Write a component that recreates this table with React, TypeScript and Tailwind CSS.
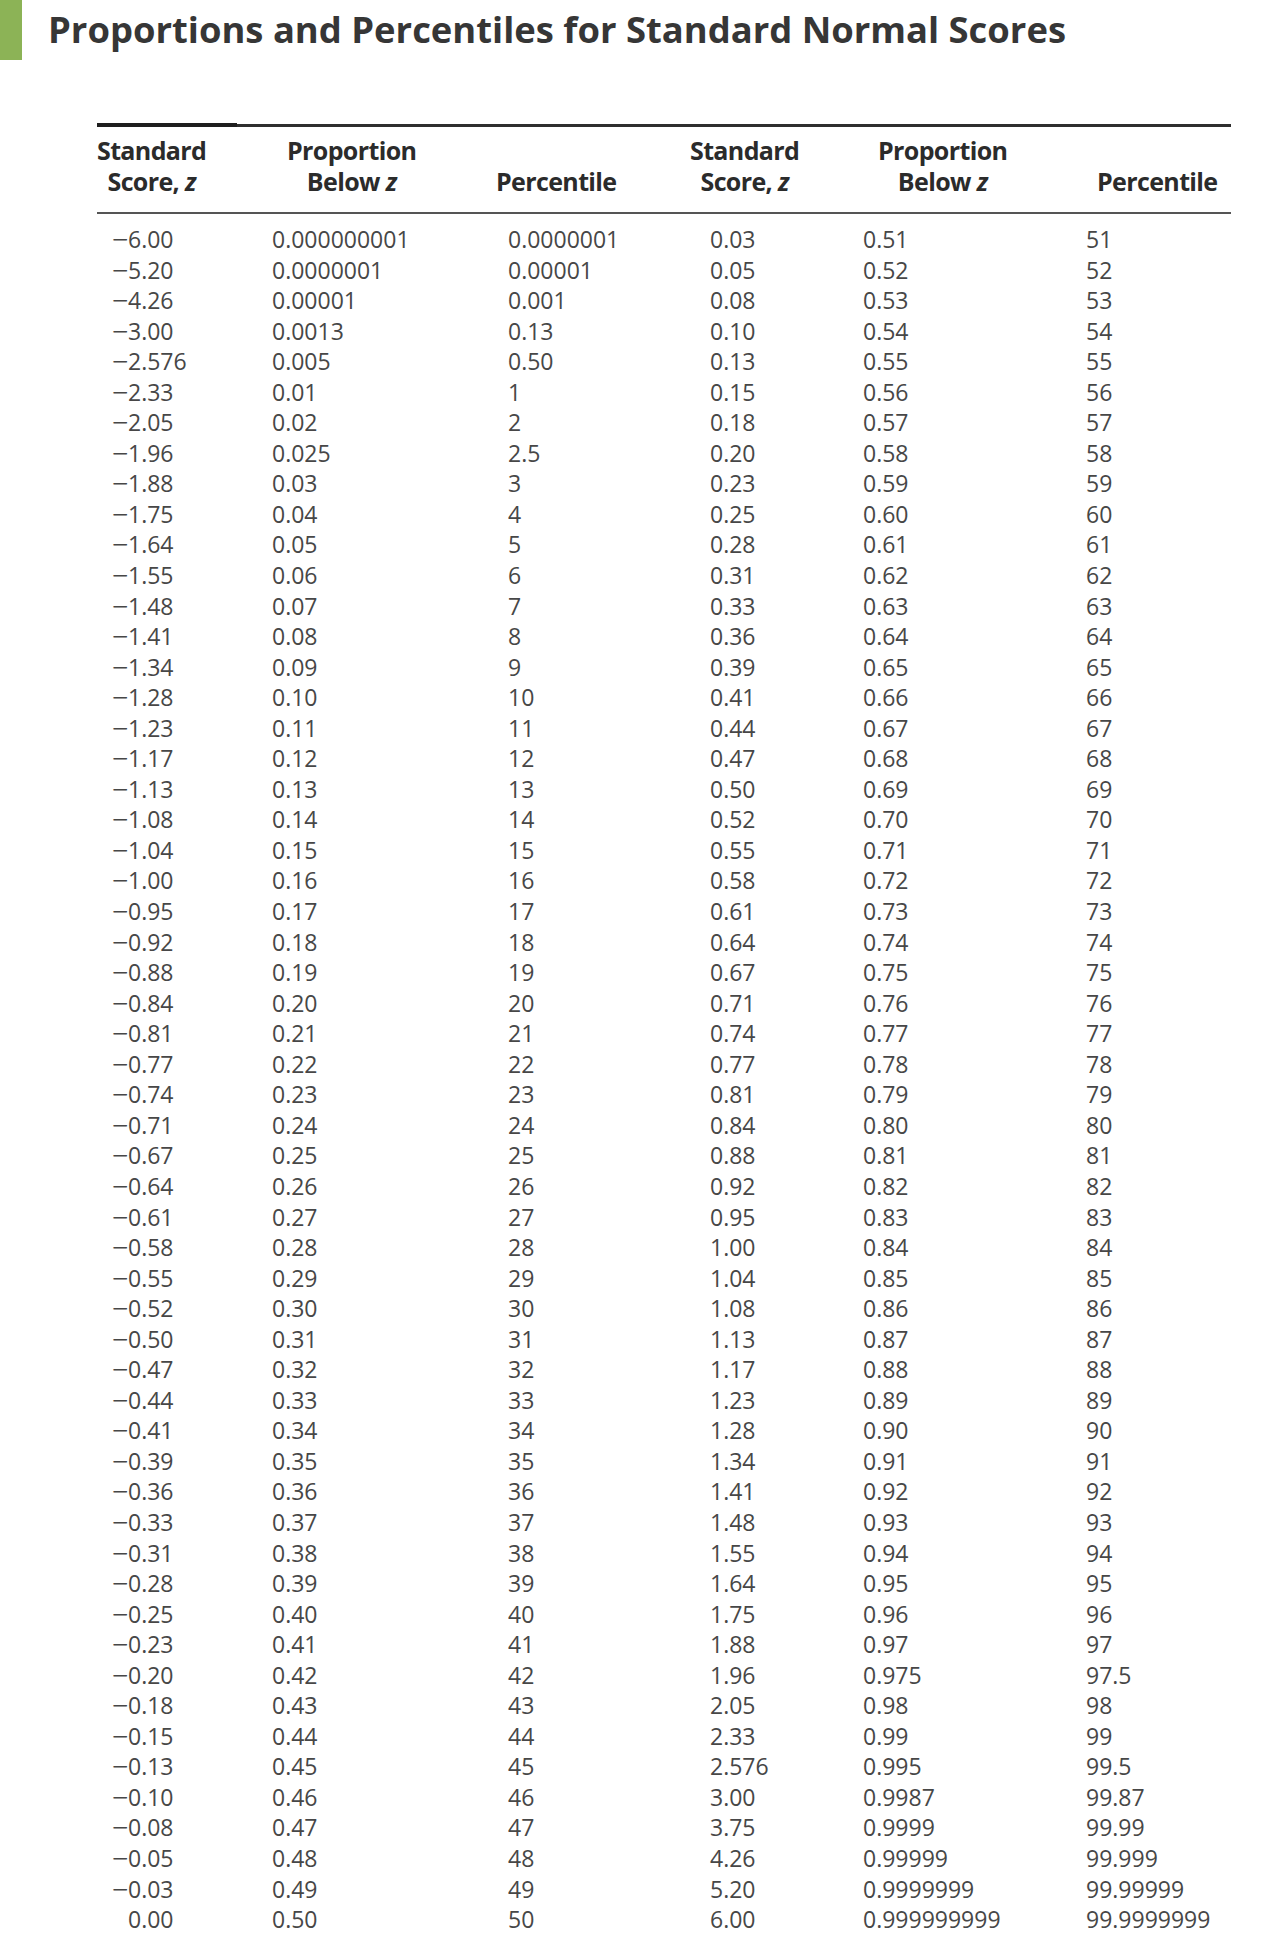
const leftZ = [
  "-6.00", "-5.20", "-4.26", "-3.00", "-2.576", "-2.33", "-2.05", "-1.96", "-1.88", "-1.75",
  "-1.64", "-1.55", "-1.48", "-1.41", "-1.34", "-1.28", "-1.23", "-1.17", "-1.13", "-1.08",
  "-1.04", "-1.00", "-0.95", "-0.92", "-0.88", "-0.84", "-0.81", "-0.77", "-0.74", "-0.71",
  "-0.67", "-0.64", "-0.61", "-0.58", "-0.55", "-0.52", "-0.50", "-0.47", "-0.44", "-0.41",
  "-0.39", "-0.36", "-0.33", "-0.31", "-0.28", "-0.25", "-0.23", "-0.20", "-0.18", "-0.15",
  "-0.13", "-0.10", "-0.08", "-0.05", "-0.03", "0.00",
];

const rightZ = [
  "0.03", "0.05", "0.08", "0.10", "0.13", "0.15", "0.18", "0.20", "0.23", "0.25",
  "0.28", "0.31", "0.33", "0.36", "0.39", "0.41", "0.44", "0.47", "0.50", "0.52",
  "0.55", "0.58", "0.61", "0.64", "0.67", "0.71", "0.74", "0.77", "0.81", "0.84",
  "0.88", "0.92", "0.95", "1.00", "1.04", "1.08", "1.13", "1.17", "1.23", "1.28",
  "1.34", "1.41", "1.48", "1.55", "1.64", "1.75", "1.88", "1.96", "2.05", "2.33",
  "2.576", "3.00", "3.75", "4.26", "5.20", "6.00",
];

// 0.03 .. 0.50 and 3 .. 50
const mid = Array.from({ length: 48 }, (_, i) => i + 3);
const leftProp = [
  "0.000000001", "0.0000001", "0.00001", "0.0013", "0.005", "0.01", "0.02", "0.025",
  ...mid.map((n) => (n / 100).toFixed(2)),
];
const leftPct = [
  "0.0000001", "0.00001", "0.001", "0.13", "0.50", "1", "2", "2.5",
  ...mid.map((n) => String(n)),
];

const upper = Array.from({ length: 47 }, (_, i) => i + 51);
const rightProp = [
  ...upper.map((n) => (n / 100).toFixed(2)),
  "0.975", "0.98", "0.99", "0.995", "0.9987", "0.9999", "0.99999", "0.9999999", "0.999999999",
];
const rightPct = [
  ...upper.map((n) => String(n)),
  "97.5", "98", "99", "99.5", "99.87", "99.99", "99.999", "99.99999", "99.9999999",
];

function ZScore({ value }: { value: string }) {
  const negative = value.startsWith("-");
  return (
    <span>
      <span
        className={`inline-block w-[16px] origin-left scale-x-[1.25] ${negative ? "" : "invisible"}`}
      >
        −
      </span>
      {negative ? value.slice(1) : value}
    </span>
  );
}

function StackedHead({ top, bottom }: { top: string; bottom: string }) {
  return (
    <div className="inline-block text-center">
      <div>{top}</div>
      <div>
        {bottom} <span className="italic">z</span>
      </div>
    </div>
  );
}

export default function App() {
  return (
    <main className="min-h-[1945px] bg-white font-['Open_Sans',sans-serif] text-[#444]">
      <div className="flex items-start">
        <div className="h-[60px] w-[22px] bg-[#8cb356]" />
        <h1 className="ml-[26px] pt-[5px] text-[36.4px] font-bold leading-[48px] text-[#363636]">
          Proportions and Percentiles for Standard Normal Scores
        </h1>
      </div>

      <section className="ml-[97px] mt-[63px] w-[1134px]">
        <div className="flex">
          <div className="h-[4px] w-[140px] bg-[#1e1e1e]" />
          <div className="mt-[0.5px] h-[3px] flex-1 bg-[#2e2e2e]" />
        </div>

        <div className="grid grid-cols-[190px_209px_194px_188px_219px_1fr] items-end pb-[15px] pt-[8px] text-[25px] font-bold leading-[31px] tracking-[-0.025em] text-[#2b2b2b]">
          <div>
            <StackedHead top="Standard" bottom="Score," />
          </div>
          <div>
            <StackedHead top="Proportion" bottom="Below" />
          </div>
          <div>Percentile</div>
          <div>
            <StackedHead top="Standard" bottom="Score," />
          </div>
          <div>
            <StackedHead top="Proportion" bottom="Below" />
          </div>
          <div>Percentile</div>
        </div>

        <div className="h-[2px] bg-[#555]" />

        <div className="pl-[15px] pt-[10px] text-[23px] leading-[30.55px] text-[#474747]">
          {leftZ.map((z, i) => (
            <div
              key={z}
              className="grid grid-cols-[160px_236px_202px_153px_223px_1fr]"
            >
              <ZScore value={z} />
              <span>{leftProp[i]}</span>
              <span>{leftPct[i]}</span>
              <span>{rightZ[i]}</span>
              <span>{rightProp[i]}</span>
              <span>{rightPct[i]}</span>
            </div>
          ))}
        </div>
      </section>
    </main>
  );
}
